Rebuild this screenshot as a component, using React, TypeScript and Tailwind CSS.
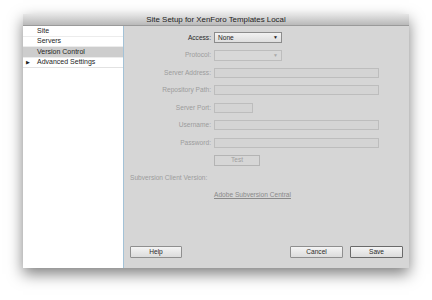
import { ReactNode } from "react"

type RowProps = {
    label: string;
    dark?: boolean;
    children?: ReactNode;
}

//Linha do formulario
const Row = ({ label, dark, children }: RowProps) => {
    return (
        <div className="flex items-center h-[17.5px]">
            <div className={`w-[87px] text-right ${dark ? 'text-[#2a2a2a]' : 'text-[#9c9c9c]'}`}>{label}</div>
            <div className="flex-1 pl-[3px] pr-[30px] flex items-center">{children}</div>
        </div>
    )
}

const Field = ({ w }: { w: string }) => (
    <div className={`${w} h-[10px] border border-[#bdbdbd] bg-[#d4d4d4]`} />
)

const Button = ({ label, w, strong }: { label: string; w: string; strong?: boolean }) => (
    <div className={`${w} h-[12px] flex items-center justify-center rounded-[1px] border ${strong ? 'border-[#6a6a6a]' : 'border-[#8f8f8f]'} bg-gradient-to-b from-[#f4f4f4] to-[#dcdcdc] text-[#2a2a2a] text-[6.6px]`}>
        {label}
    </div>
)

export default function App() {
    const items = ["Site", "Servers", "Version Control", "Advanced Settings"]

    return (
        <div className="w-[432px] h-[300px] bg-white pt-[14px] pl-[23px]" style={{ fontFamily: '"Liberation Sans", Arial, sans-serif' }}>

            <div className="w-[386px] h-[254px] flex flex-col bg-[#d6d6d6] shadow-[0_6px_14px_rgba(0,0,0,0.5)]">

                {/*Barra de titulo*/}
                <div className="h-[12px] flex items-center justify-center bg-gradient-to-b from-[#e6e6e6] to-[#b9b9b9] border-b border-[#9a9a9a] text-[7.9px] text-[#222]">
                    Site Setup for XenForo Templates Local
                </div>

                <div className="flex flex-1">

                    {/*Lista lateral*/}
                    <div className="w-[101px] bg-white border-r border-[#a3c2d7] text-[7px] text-[#1e1e1e]">
                        {items.map((item, i) => (
                            <div key={item} className={`flex items-center h-[10.6px] ${i === 2 ? 'bg-[#cdcdcd]' : ''} ${i < 3 ? 'border-b border-[#ececec]' : 'border-b border-[#e2e2e2]'}`}>
                                <span className="w-[14px] pl-[3px] text-[5px]">{i === 3 ? '▶' : ''}</span>
                                <span>{item}</span>
                            </div>
                        ))}
                    </div>

                    {/*Painel principal*/}
                    <div className="flex-1 flex flex-col text-[6.6px] pt-[3px]">

                        <Row label="Access:" dark>
                            <div className="w-[68px] h-[11px] flex items-center justify-between border border-[#8c8c8c] bg-gradient-to-b from-[#f2f2f2] to-[#dedede] pl-[3px] pr-[3px] text-[#222]">
                                <span>None</span>
                                <span className="text-[5px]">▼</span>
                            </div>
                        </Row>
                        <Row label="Protocol:">
                            <div className="w-[68px] h-[11px] flex items-center justify-end border border-[#bdbdbd] bg-[#d8d8d8] pr-[3px] text-[#a8a8a8]">
                                <span className="text-[5px]">▼</span>
                            </div>
                        </Row>
                        <Row label="Server Address:"><Field w="w-[165px]" /></Row>
                        <Row label="Repository Path:"><Field w="w-[165px]" /></Row>
                        <Row label="Server Port:"><Field w="w-[39px]" /></Row>
                        <Row label="Username:"><Field w="w-[165px]" /></Row>
                        <Row label="Password:"><Field w="w-[165px]" /></Row>
                        <Row label="">
                            <div className="w-[46px] h-[11px] flex items-center justify-center border border-[#b4b4b4] text-[#a0a0a0]">Test</div>
                        </Row>

                        <div className="flex items-center h-[17.5px] pl-[6px] text-[#9c9c9c]">Subversion Client Version:</div>

                        <div className="flex items-center h-[17.5px] pl-[90px]">
                            <span className="text-[#8a8a8a] underline">Adobe Subversion Central</span>
                        </div>

                        {/*Botoes*/}
                        <div className="mt-auto mb-[10px] flex items-center px-[6px]">
                            <Button label="Help" w="w-[52px]" />
                            <div className="flex-1" />
                            <Button label="Cancel" w="w-[53px]" />
                            <div className="w-[7px]" />
                            <Button label="Save" w="w-[53px]" strong />
                        </div>

                    </div>

                </div>

            </div>

        </div>
    )
}
